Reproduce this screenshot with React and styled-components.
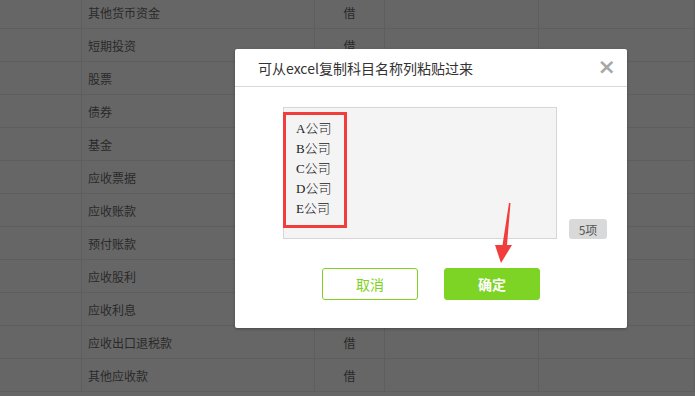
import styled, { createGlobalStyle } from 'styled-components'

const rows = [
  '其他货币资金',
  '短期投资',
  '股票',
  '债券',
  '基金',
  '应收票据',
  '应收账款',
  '预付账款',
  '应收股利',
  '应收利息',
  '应收出口退税款',
  '其他应收款',
]

const names = ['A公司', 'B公司', 'C公司', 'D公司', 'E公司']

export default function App() {
  return (
    <Page>
      <GlobalStyle />
      <Table>
        {rows.map((name) => (
          <Row key={name}>
            <Cell />
            <NameCell>{name}</NameCell>
            <DirCell>借</DirCell>
            <Cell />
            <Cell />
          </Row>
        ))}
      </Table>
      <Mask />
      <Dialog>
        <Header>
          <Title>可从excel复制科目名称列粘贴过来</Title>
          <Close>×</Close>
        </Header>
        <Body>
          <PasteRow>
            <PasteArea>
              <PasteBox readOnly value={names.join('\n')} />
              <Highlight />
            </PasteArea>
            <Count>5项</Count>
          </PasteRow>
          <Actions>
            <Button>取消</Button>
            <Button $primary>确定</Button>
          </Actions>
        </Body>
        <Arrow width="20" height="62" viewBox="0 0 20 62">
          <polygon points="14,0 15.5,0 12,42 17,42 6,60 0,42 7.5,42" fill="#f23d3d" />
        </Arrow>
      </Dialog>
    </Page>
  )
}

const GlobalStyle = createGlobalStyle`
  html, body {
    margin: 0;
    padding: 0;
    overflow: hidden;
    background: #fff;
  }
  body {
    font-family: 'Noto Sans CJK SC', 'Noto Sans', sans-serif;
  }
`

const Page = styled.div`
  position: relative;
  width: 695px;
  height: 396px;
  overflow: hidden;
`

const Table = styled.div`
  margin-top: -4px;
  display: flex;
  flex-direction: column;
`

const Row = styled.div`
  display: grid;
  grid-template-columns: 82px 233px 70px 154px 1fr;
  height: 33px;
  border-bottom: 1px solid #ebebeb;
  box-sizing: border-box;
`

const Cell = styled.div`
  border-right: 1px solid #ebebeb;
  display: flex;
  align-items: center;
  font-size: 12px;
  color: #6a6a6a;
`

const NameCell = styled(Cell)`
  padding-left: 6px;
`

const DirCell = styled(Cell)`
  justify-content: center;
`

const Mask = styled.div`
  position: absolute;
  inset: 0;
  background: rgba(0, 0, 0, 0.6);
`

const Dialog = styled.div`
  position: absolute;
  left: 235px;
  top: 49px;
  width: 392px;
  height: 279px;
  background: #fff;
  border-radius: 2px;
  box-shadow: 0 1px 3px rgba(0, 0, 0, 0.3);
  display: flex;
  flex-direction: column;
`

const Header = styled.div`
  height: 37px;
  border-bottom: 1px solid #d9d9d9;
  display: flex;
  align-items: center;
  justify-content: space-between;
  padding: 0 11px 0 23px;
`

const Title = styled.div`
  font-size: 14px;
  color: #333;
`

const Close = styled.span`
  font-family: 'DejaVu Sans', sans-serif;
  font-size: 22px;
  font-weight: bold;
  color: #a8a8a8;
  line-height: 1;
  margin-top: -1px;
`

const Body = styled.div`
  padding: 20px 0 0 48px;
  display: flex;
  flex-direction: column;
`

const PasteRow = styled.div`
  display: flex;
  align-items: flex-end;
  gap: 12px;
`

const PasteArea = styled.div`
  position: relative;
  width: 274px;
  height: 132px;
`

const PasteBox = styled.textarea`
  width: 100%;
  height: 100%;
  box-sizing: border-box;
  resize: none;
  border: 1px solid #d6d6d6;
  background: #f4f4f4;
  padding: 11px 12px;
  margin: 0;
  outline: none;
  font-family: 'Liberation Serif', 'Noto Sans CJK SC', serif;
  font-size: 13px;
  font-weight: 300;
  line-height: 20px;
  color: #222;
`

const Highlight = styled.div`
  position: absolute;
  left: 0;
  top: 5px;
  width: 64px;
  height: 116px;
  box-sizing: border-box;
  border: 3px solid #f23d3d;
  pointer-events: none;
`

const Count = styled.span`
  width: 38px;
  height: 20px;
  background: #d9d9d9;
  border-radius: 3px;
  font-size: 12px;
  color: #555;
  display: flex;
  align-items: center;
  justify-content: center;
`

const Actions = styled.div`
  display: flex;
  justify-content: center;
  gap: 26px;
  margin: 29px 0 0 -48px;
`

const Button = styled.button`
  width: 96px;
  height: 32px;
  box-sizing: border-box;
  border-radius: 3px;
  border: 1px solid #7ed321;
  background: ${(props) => (props.$primary ? '#7ed424' : '#fff')};
  color: ${(props) => (props.$primary ? '#fff' : '#7ed321')};
  font-family: 'Noto Sans CJK SC', sans-serif;
  font-size: 14px;
  font-weight: ${(props) => (props.$primary ? 600 : 400)};
  padding: 0;
`

const Arrow = styled.svg`
  position: absolute;
  left: 495px;
  top: 203px;
  margin-left: -235px;
  margin-top: -49px;
`
